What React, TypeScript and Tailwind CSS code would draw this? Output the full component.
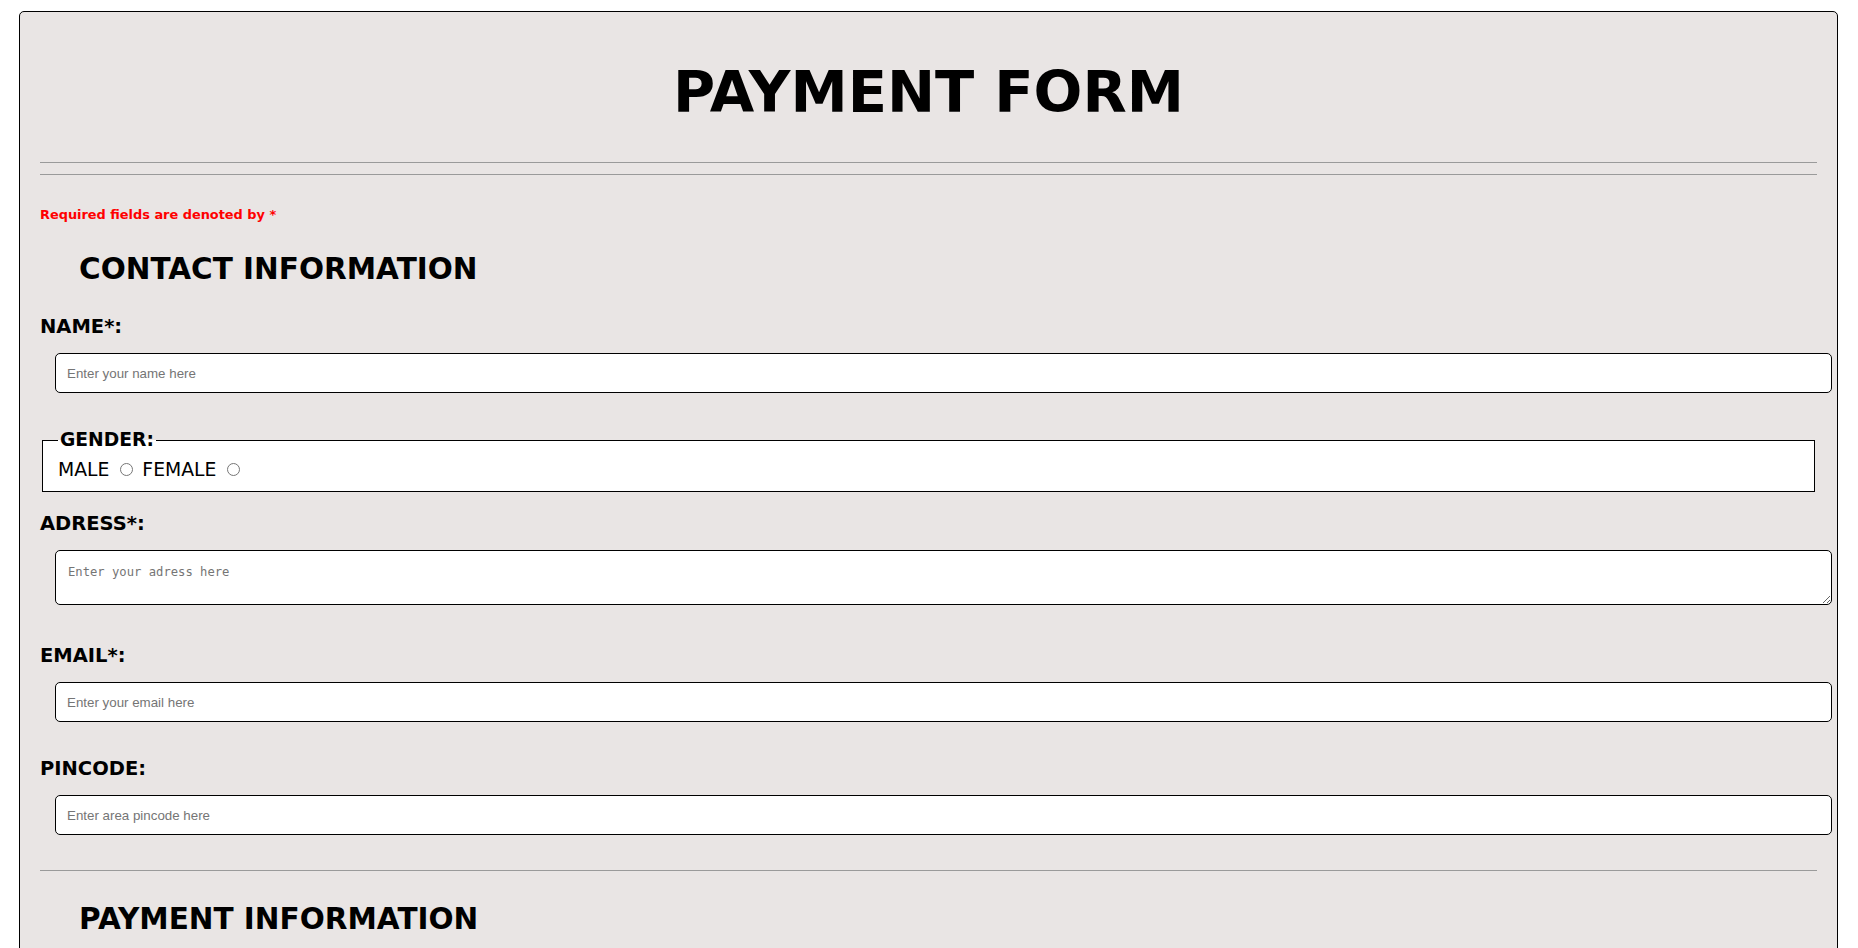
import React from "react";

const label = "block font-bold text-[19.5px] leading-[22px] text-black";
const field =
  "block w-full ml-[15px] h-[40px] px-[11px] bg-white border border-black rounded-[5px] font-['Liberation_Sans',Arial,sans-serif] text-[13.33px] text-black placeholder:text-[#757575] outline-none";

export default function App() {
  return (
    <div className="min-h-screen bg-white pt-[11px] pb-[20px]">
      <form className="ml-[19px] mr-[20px] px-[20px] pt-[20px] pb-[40px] bg-[#e9e5e4] border border-black rounded-[5px] font-['DejaVu_Sans',Verdana,sans-serif] text-black">
        <h1 className="mt-[33px] text-center font-bold text-[57.5px] leading-[56px]">PAYMENT FORM</h1>
        <hr className="mt-[41px] border-[#9a9a9a]" />
        <hr className="mt-[11px] border-[#9a9a9a]" />

        <p className="mt-[32px] font-bold text-[12.9px] leading-[16px] text-[#ff0000]">
          Required fields are denoted by *
        </p>

        {/* CONTACT */}
        <h2 className="mt-[29px] ml-[39px] font-bold text-[29.5px] leading-[34px]">CONTACT INFORMATION</h2>

        <label className={`mt-[30px] ${label}`} htmlFor="name">NAME*:</label>
        <input id="name" type="text" placeholder="Enter your name here" className={`mt-[15px] ${field}`} />

        <fieldset className="mt-[36px] mx-[2px] px-[15px] pt-[8px] pb-[10px] bg-white border border-black">
          <legend className="px-[2px] font-bold text-[18.7px] leading-[22px]">GENDER:</legend>
          <div className="text-[18.8px] leading-[22px]">
            MALE{" "}
            <input type="radio" name="gender" className="ml-[5px] mr-[3px] mt-[3px] align-baseline" />{" "}
            FEMALE{" "}
            <input type="radio" name="gender" className="ml-[5px] mr-[3px] mt-[3px] align-baseline" />
          </div>
        </fieldset>

        <label className={`mt-[21px] ${label}`} htmlFor="adress">ADRESS*:</label>
        <textarea
          id="adress"
          placeholder="Enter your adress here"
          className="block w-full ml-[15px] mt-[15px] h-[55px] px-[12px] pt-[12px] bg-white border border-black rounded-[5px] font-['DejaVu_Sans_Mono',monospace] text-[12.2px] text-black placeholder:text-[#757575] outline-none"
        />

        <label className={`mt-[40px] ${label}`} htmlFor="email">EMAIL*:</label>
        <input id="email" type="email" placeholder="Enter your email here" className={`mt-[15px] ${field}`} />

        <label className={`mt-[36px] ${label}`} htmlFor="pincode">PINCODE:</label>
        <input id="pincode" type="text" placeholder="Enter area pincode here" className={`mt-[15px] ${field}`} />

        <hr className="mt-[35px] border-[#9a9a9a]" />

        {/* PAYMENT */}
        <h2 className="mt-[31px] ml-[39px] font-bold text-[29.5px] leading-[34px]">PAYMENT INFORMATION</h2>

        <label className={`mt-[30px] ${label}`} htmlFor="cardname">NAME ON CARD*:</label>
        <input id="cardname" type="text" placeholder="Enter name on card" className={`mt-[15px] ${field}`} />

        <label className={`mt-[36px] ${label}`} htmlFor="cardnum">CARD NUMBER*:</label>
        <input id="cardnum" type="text" placeholder="Enter card number" className={`mt-[15px] ${field}`} />

        <label className={`mt-[36px] ${label}`} htmlFor="expiry">EXPIRY DATE*:</label>
        <input id="expiry" type="text" placeholder="MM/YY" className={`mt-[15px] ${field}`} />

        <label className={`mt-[36px] ${label}`} htmlFor="cvv">CVV*:</label>
        <input id="cvv" type="password" placeholder="Enter CVV" className={`mt-[15px] ${field}`} />
      </form>
    </div>
  );
}
